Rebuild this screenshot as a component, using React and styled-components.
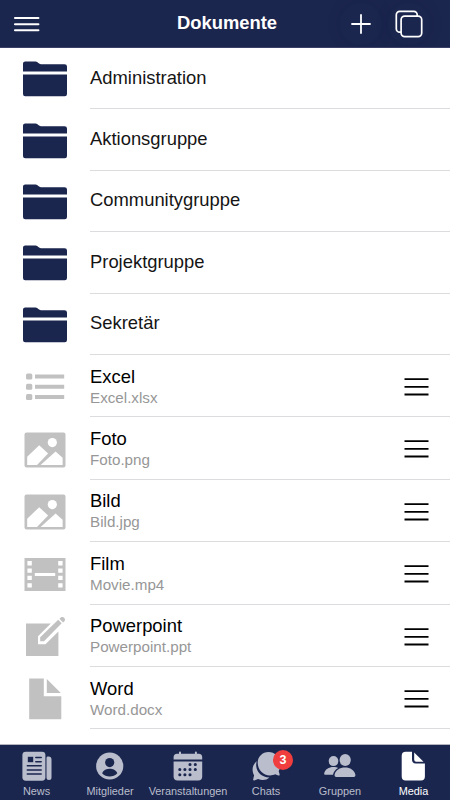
import React from 'react';
import styled, { createGlobalStyle } from 'styled-components';

const GlobalStyle = createGlobalStyle`
  * {
    box-sizing: border-box;
  }

  body {
    margin: 0;
    background: #fff;
    font-family: "Liberation Sans", Arial, sans-serif;
    overflow: hidden;
  }

  svg {
    display: block;
  }
`;

const Screen = styled.div`
  display: flex;
  flex-direction: column;
  height: 800px;
  background: #fff;
`;

const Header = styled.header`
  display: grid;
  grid-template-columns: 110px 1fr 110px;
  align-items: center;
  flex: none;
  height: 48px;
  overflow: hidden;
  color: #fff;
  background: #1b264f;
  border-bottom: 1px solid #3b4166;

  h1 {
    margin: 0;
    text-align: center;
    font-size: 18.4px;
    line-height: 24px;
    font-weight: 700;
    padding: 0 0 1px 4px;
  }
`;

const MenuButton = styled.div`
  padding: 1px 0 0 13px;
`;

const Actions = styled.div`
  display: flex;
  align-items: center;
  justify-content: flex-end;
  gap: 6px;
  padding-right: 20px;
`;

const RoundButton = styled.div`
  display: flex;
  align-items: center;
  justify-content: center;
  flex: none;
  width: 42px;
  height: 42px;
  border-radius: 50%;
  box-shadow: 0 0 14px rgba(12, 16, 56, 0.16);
`;

const List = styled.main`
  flex: 1;
  overflow: hidden;
`;

const Row = styled.div`
  display: flex;
  height: ${props => (props.$file ? '62.4px' : '61.4px')};
`;

const RowIcon = styled.div`
  width: 90px;
  display: flex;
  align-items: center;
  justify-content: center;
  flex: none;
  padding-top: ${props => (props.$file ? '2px' : '1px')};
  color: ${props => (props.$file ? '#c1c1c1' : '#1b264f')};
`;

const RowBody = styled.div`
  display: flex;
  flex: 1;
  align-items: center;
  justify-content: space-between;
  padding: ${props => (props.$file ? '1.8px 21px 0 0' : '0 21px 1px 0')};
  border-bottom: 1.4px solid #dcdcde;
`;

const Name = styled.div`
  font-size: 18.4px;
  line-height: 22px;
  color: ${props => (props.$file ? '#000' : '#151515')};
`;

const FileName = styled.div`
  font-size: 15.2px;
  line-height: 20px;
  color: #979797;
`;

const Handle = styled.div`
  padding-top: 1px;
`;

const TabBar = styled.nav`
  display: flex;
  flex: none;
  height: 56px;
  background: #1b264f;
  border-top: 1px solid #b4b6bf;
`;

const Tab = styled.div`
  display: flex;
  flex-direction: column;
  align-items: center;
  width: ${props => props.$width}px;
  padding-top: 6px;
  color: ${props => (props.$active ? '#fff' : '#b9bdcc')};

  span {
    margin-top: 2px;
    font-size: 10.9px;
    line-height: 14px;
  }
`;

const TabIcon = styled.div`
  position: relative;
  height: 31px;
`;

const Badge = styled.b`
  position: absolute;
  top: -1px;
  left: 21px;
  width: 20px;
  height: 20px;
  border-radius: 50%;
  background: #f03d3d;
  color: #fff;
  font-size: 12.5px;
  line-height: 20px;
  text-align: center;
`;

const MenuIcon = () => (
  <svg width="27" height="18" viewBox="0 0 27 18" fill="none" stroke="currentColor" strokeWidth="2.1" strokeLinecap="round">
    <path d="M2 3h23.4M2 9.2h23.4M2 15.3h23.4" />
  </svg>
);

const PlusIcon = () => (
  <svg width="22" height="22" viewBox="0 0 22 22" fill="none" stroke="currentColor" strokeWidth="1.8" strokeLinecap="round">
    <path d="M11 2v18M2 11h18" />
  </svg>
);

const CopyIcon = () => (
  <svg width="28" height="28" viewBox="0 0 28 28" fill="none" stroke="currentColor" strokeWidth="1.7">
    <rect x="6.1" y="6.1" width="20.6" height="20.6" rx="3.6" />
    <path d="M22.2 6V4.7a3.4 3.4 0 0 0-3.4-3.4H4.7a3.4 3.4 0 0 0-3.4 3.4v14.1a3.4 3.4 0 0 0 3.4 3.4H6" />
  </svg>
);

const FolderIcon = () => (
  <svg width="44" height="36" viewBox="0 0 44 36" fill="currentColor">
    <path d="M0 10.5V2.6Q0 .5 2.2.5h10.5c2.1 0 3.2 2.8 5.2 2.8h23.6Q44 3.3 44 5.6v4.9z" />
    <path d="M0 13.5h44v19.6a2.2 2.2 0 0 1-2.2 2.2H2.2A2.2 2.2 0 0 1 0 33.1z" />
  </svg>
);

const ListIcon = () => (
  <svg width="39" height="28" viewBox="0 0 39 28" fill="currentColor">
    <rect x="0" y=".6" width="6.3" height="6" rx="1.6" />
    <rect x="0" y="10.8" width="6.3" height="6" rx="1.6" />
    <rect x="0" y="21" width="6.3" height="6" rx="1.6" />
    <path d="M9 1.6h29.2v4H9zM9 11.8h29.2v4H9zM9 22h29.2v4H9z" />
  </svg>
);

const ImageIcon = () => (
  <svg width="42" height="36" viewBox="0 0 42 36">
    <rect x=".5" y=".5" width="41" height="35" rx="2" fill="currentColor" />
    <circle cx="28.3" cy="10.6" r="4.6" fill="#fff" />
    <path d="M3.2 33v-8.2L15.2 13.2l8.9 8.2L13 33z" fill="#fff" />
    <path d="M16.6 33l15-13.5 7 6.2V33z" fill="#fff" />
  </svg>
);

const FilmIcon = () => (
  <svg width="42" height="33" viewBox="0 0 42 33">
    <path d="M.5 0h41v33H.5z" fill="currentColor" />
    <path
      d="M3.4 3.1h4.4v4.4H3.4zM3.4 10.4h4.4v4.4H3.4zM3.4 17.7h4.4v4.4H3.4zM3.4 25.2h4.4v4.4H3.4zM34.2 3.1h4.4v4.4h-4.4zM34.2 10.4h4.4v4.4h-4.4zM34.2 17.7h4.4v4.4h-4.4zM34.2 25.2h4.4v4.4h-4.4zM10.8 15h20.4v2.9H10.8z"
      fill="#fff"
    />
  </svg>
);

const EditIcon = () => (
  <svg width="40" height="40" viewBox="-1 0 40 40" fill="currentColor">
    <path d="M0 6.5h24.8L12 19.2v8.1h7.5l12.9-12.9V39H0z" />
    <path d="M14.2 20.3L32.2 2.8l3.5 3.5-17.7 18h-3.8z" />
    <path d="M33.4 1.7l.9-.8a2.6 2.6 0 0 1 3.8 3.7l-1 .8z" />
  </svg>
);

const PageIcon = () => (
  <svg width="33" height="42" viewBox="0 0 33 42" fill="currentColor">
    <path d="M.2.5h14.6v17.7h17.5v23.1H.2z" />
    <path d="M17.8.9l14 14H17.8z" />
  </svg>
);

const HandleIcon = () => (
  <svg width="25" height="20" viewBox="0 0 25 20" fill="none" stroke="#000" strokeWidth="1.8">
    <path d="M.5 2.1h24M.5 9.9h24M.5 17.5h24" />
  </svg>
);

const NewsIcon = () => (
  <svg width="30" height="30" viewBox="0 0 30 30">
    <rect x=".4" y=".7" width="23" height="29" rx="3.4" fill="currentColor" />
    <path d="M25.3 5.6h1.2a3 3 0 0 1 3 3v17.8a2.5 2.5 0 0 1-5 0V6.4z" fill="currentColor" />
    <path d="M5.8 5.8h5.4v5.4H5.8z" fill="#1b264f" />
    <path d="M13.8 6.6h5.4M13.8 10.7h5.4M5.3 14.8h13.9M5.3 18.9h13.9M5.3 23h13.9" stroke="#1b264f" strokeWidth="1.5" strokeLinecap="round" />
  </svg>
);

const PersonIcon = () => (
  <svg width="28" height="30" viewBox="0 0 28 30">
    <circle cx="13.7" cy="15" r="13.6" fill="currentColor" />
    <circle cx="13.7" cy="11.6" r="4.6" fill="#1b264f" />
    <path d="M6.1 22.2c1.1-3 4.5-4.4 7.6-4.4s6.5 1.4 7.6 4.4c-2 2.1-4.8 3.2-7.6 3.2s-5.6-1.1-7.6-3.2z" fill="#1b264f" />
  </svg>
);

const CalendarIcon = () => (
  <svg width="30" height="30" viewBox="0 0 30 30">
    <path d="M.6 8.5V6.2A3.5 3.5 0 0 1 4.1 2.7h21.6a3.5 3.5 0 0 1 3.5 3.5v2.3z" fill="currentColor" />
    <path d="M.6 10.6h28.6v15a4 4 0 0 1-4 4H4.6a4 4 0 0 1-4-4z" fill="currentColor" />
    <path d="M7 3V1.6M22.9 3V1.6" stroke="currentColor" strokeWidth="2" strokeLinecap="round" />
    <path
      d="M17 13.5h.01M22.3 13.5h.01M6.8 18.5h.01M11.9 18.5h.01M17 18.5h.01M22.3 18.5h.01M6.8 23.8h.01M11.9 23.8h.01M17 23.8h.01"
      stroke="#1b264f"
      strokeWidth="3.1"
      strokeLinecap="round"
    />
  </svg>
);

const ChatsIcon = () => (
  <svg width="28" height="30" viewBox="0 0 28 30" fill="currentColor">
    <path d="M4.8 10.2C1.8 12.7.4 15.8.6 19c.1 2.2.7 3.8 1.5 5.3l-.9 4c-.2.9.4 1.3 1.1 1.1l3.8-1.4c3.8 1.7 8.4 1.3 11.4-1.5-7 .2-12.8-5-13.3-11.5-.1-1.7.1-3.3.6-4.8z" />
    <path d="M16.6.9C10.3.9 5.7 5.7 5.7 11.7c0 7.1 5.6 12.7 12.3 12.7 1.9 0 3.8-.4 5.2-1.1l3.1 1.2c.9.3 1.5-.3 1.3-1.2l-.9-3.3c1-1.7 1.5-3.9 1.5-6.1C28.2 6.5 23.4.9 16.6.9z" />
  </svg>
);

const GroupIcon = () => (
  <svg width="32" height="30" viewBox="0 0 32 30" fill="currentColor">
    <ellipse cx="9.5" cy="10.1" rx="4.8" ry="5" />
    <path d="M1.3 23.7c-.9 0-1.3-.6-1.1-1.5.8-4 4.6-6.3 9.3-6.3 1.9 0 3.5.3 4.7 1-3 1.6-4.7 3.9-5.2 6.8z" />
    <ellipse cx="21.2" cy="9" rx="5.6" ry="5.9" />
    <path d="M21 16.6c5.3 0 9.5 2.6 10.4 7.2.2 1.2-.4 2.1-1.6 2.1H12.2c-1.2 0-1.8-.9-1.6-2.1.9-4.6 5.1-7.2 10.4-7.2z" />
  </svg>
);

const MediaIcon = () => (
  <svg width="25" height="30" viewBox="0 0 25 30" fill="currentColor">
    <path d="M4.7.8H11v7.7a4 4 0 0 0 4 4h8.9v13a4 4 0 0 1-4 4H4.7a4 4 0 0 1-4-4V4.8a4 4 0 0 1 4-4z" />
    <path d="M13.2 1.5l9.3 9.2h-7.3a2 2 0 0 1-2-2z" />
  </svg>
);

const folders = ['Administration', 'Aktionsgruppe', 'Communitygruppe', 'Projektgruppe', 'Sekretär'];

const files = [
  { name: 'Excel', file: 'Excel.xlsx', icon: <ListIcon /> },
  { name: 'Foto', file: 'Foto.png', icon: <ImageIcon /> },
  { name: 'Bild', file: 'Bild.jpg', icon: <ImageIcon /> },
  { name: 'Film', file: 'Movie.mp4', icon: <FilmIcon /> },
  { name: 'Powerpoint', file: 'Powerpoint.ppt', icon: <EditIcon /> },
  { name: 'Word', file: 'Word.docx', icon: <PageIcon /> },
];

const tabs = [
  { label: 'News', width: 73, icon: <NewsIcon /> },
  { label: 'Mitglieder', width: 74, icon: <PersonIcon /> },
  { label: 'Veranstaltungen', width: 82, icon: <CalendarIcon /> },
  { label: 'Chats', width: 74, icon: <ChatsIcon />, badge: 3 },
  { label: 'Gruppen', width: 74, icon: <GroupIcon /> },
  { label: 'Media', width: 73, icon: <MediaIcon />, active: true },
];

const App = () => (
  <Screen>
    <GlobalStyle />
    <Header>
      <MenuButton><MenuIcon /></MenuButton>
      <h1>Dokumente</h1>
      <Actions>
        <RoundButton><PlusIcon /></RoundButton>
        <RoundButton><CopyIcon /></RoundButton>
      </Actions>
    </Header>
    <List>
      {folders.map(folder => (
        <Row key={folder}>
          <RowIcon><FolderIcon /></RowIcon>
          <RowBody><Name>{folder}</Name></RowBody>
        </Row>
      ))}
      {files.map(item => (
        <Row key={item.name} $file>
          <RowIcon $file>{item.icon}</RowIcon>
          <RowBody $file>
            <div>
              <Name $file>{item.name}</Name>
              <FileName>{item.file}</FileName>
            </div>
            <Handle><HandleIcon /></Handle>
          </RowBody>
        </Row>
      ))}
    </List>
    <TabBar>
      {tabs.map(tab => (
        <Tab key={tab.label} $width={tab.width} $active={tab.active}>
          <TabIcon>
            {tab.icon}
            {tab.badge && <Badge>{tab.badge}</Badge>}
          </TabIcon>
          <span>{tab.label}</span>
        </Tab>
      ))}
    </TabBar>
  </Screen>
);

export default App;
